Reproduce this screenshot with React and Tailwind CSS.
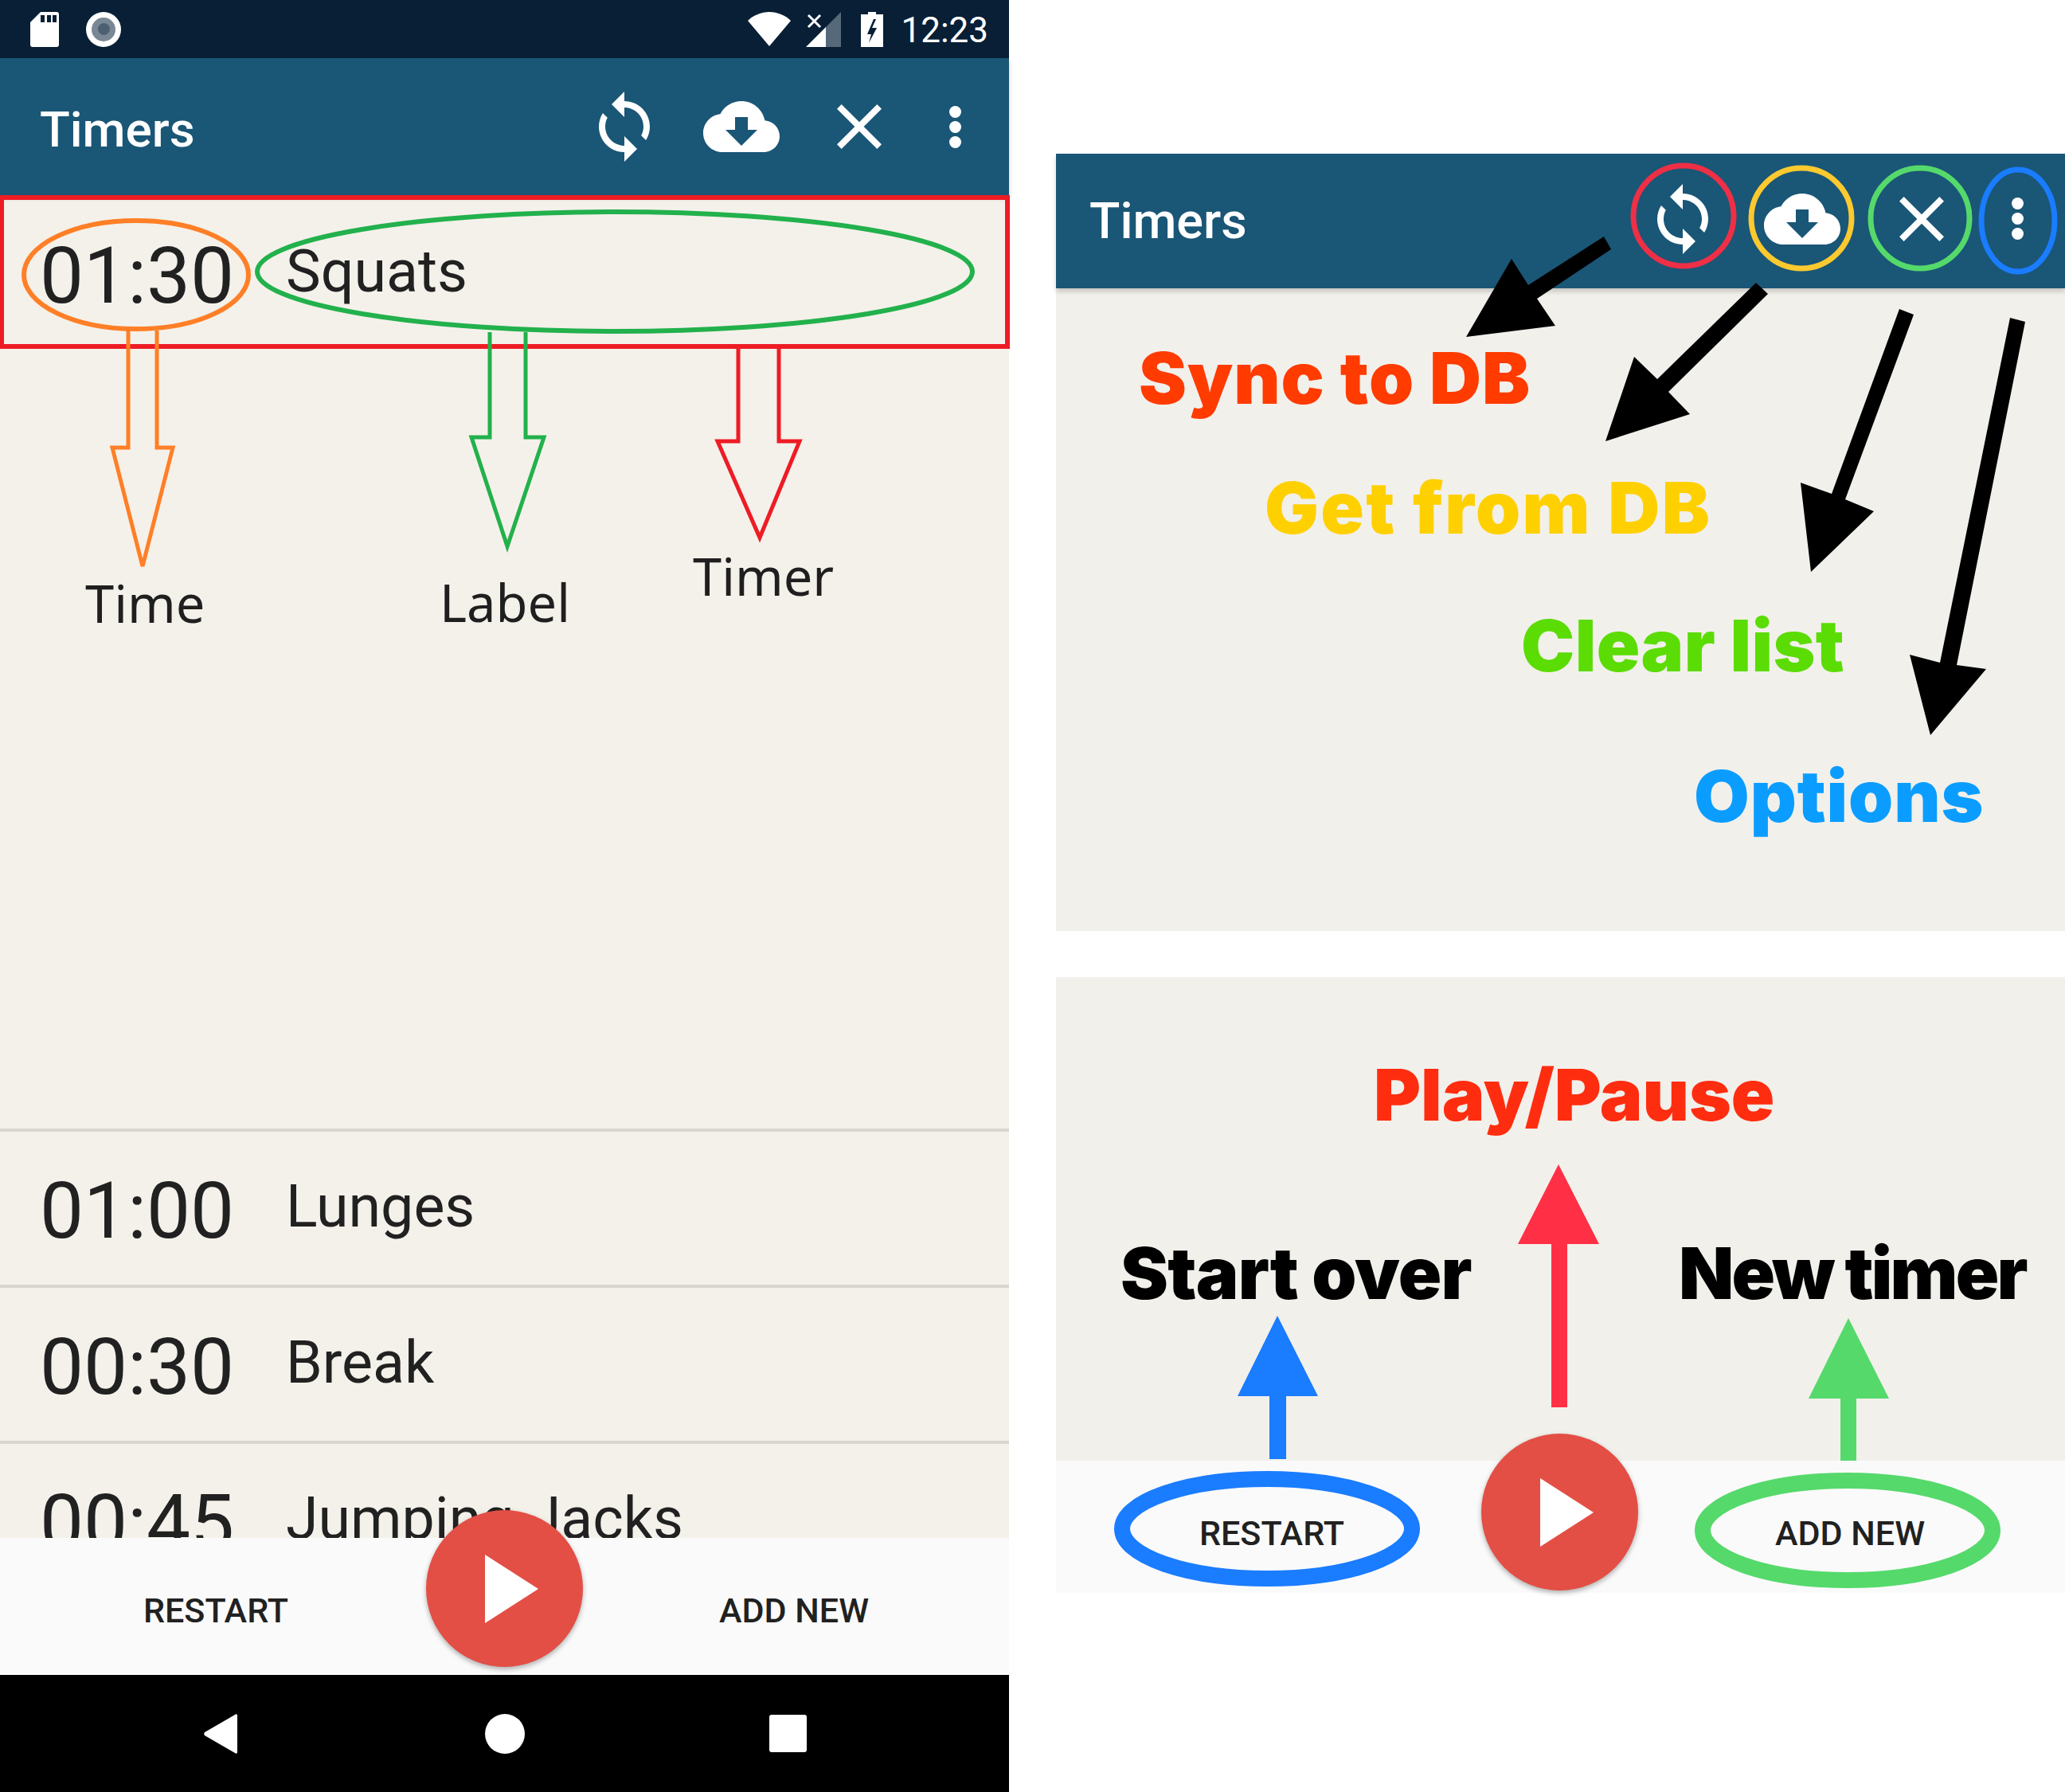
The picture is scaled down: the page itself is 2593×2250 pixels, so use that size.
const timers = [
  { time: "01:00", label: "Lunges" },
  { time: "00:30", label: "Break" },
  { time: "00:45", label: "Jumping Jacks" },
];

const MaterialIcon = ({ d, className }) => (
  <svg viewBox="0 0 24 24" className={className} fill="currentColor">
    <path d={d} />
  </svg>
);

const SYNC = "M12 4V1L8 5l4 4V6c3.31 0 6 2.69 6 6 0 1.01-.25 1.97-.7 2.8l1.46 1.46C19.54 15.03 20 13.57 20 12c0-4.42-3.58-8-8-8zm0 14c-3.31 0-6-2.69-6-6 0-1.01.25-1.97.7-2.8L5.24 7.74C4.46 8.97 4 10.43 4 12c0 4.42 3.58 8 8 8v3l4-4-4-4v3z";
const CLOUD = "M19.35 10.04C18.67 6.59 15.64 4 12 4 9.11 4 6.6 5.64 5.35 8.04 2.34 8.36 0 10.91 0 14c0 3.31 2.69 6 6 6h13c2.76 0 5-2.24 5-5 0-2.64-2.05-4.78-4.65-4.96zM17 13l-5 5-5-5h3V9h4v4h3z";
const CLOSE = "M19 6.41L17.59 5 12 10.59 6.41 5 5 6.41 10.59 12 5 17.59 6.41 19 12 13.41 17.59 19 19 17.59 13.41 12z";

const StatusBar = () => (
  <div className="h-[73px] shrink-0 bg-[#081f35] flex items-center text-white">
    <svg viewBox="0 0 36 44" className="ml-[38px] w-[36px] h-[44px]">
      <path fill="#fff" d="M13 0h20a3 3 0 0 1 3 3v38a3 3 0 0 1-3 3H3a3 3 0 0 1-3-3V13z" />
      <path fill="#081f35" d="M13 4h5v9h-5zM21 4h5v9h-5zM28 4h5v9h-5z" />
    </svg>
    <div className="ml-[34px] w-[44px] h-[44px] rounded-full bg-white flex items-center justify-center">
      <div className="w-[30px] h-[30px] rounded-full bg-[#7a8896] flex items-center justify-center">
        <div className="w-[15px] h-[15px] rounded-full bg-[#4d6072]" />
      </div>
    </div>
    <svg viewBox="0 0 54 43" className="ml-auto w-[54px] h-[43px]">
      <path fill="#fff" d="M27 43L0 11C7 4 17 0 27 0s20 4 27 11z" />
    </svg>
    <svg viewBox="0 0 44 44" className="ml-[19px] w-[44px] h-[44px]">
      <path fill="#55697a" d="M25 19L44 0v44H25z" />
      <path fill="#fff" d="M25 19v25H0z" />
      <path stroke="#fff" strokeWidth="3" d="M3 4l15 15M18 4L3 19" />
    </svg>
    <svg viewBox="0 0 28 44" className="ml-[25px] w-[28px] h-[44px]">
      <path fill="#fff" d="M9 0h10v3h9v41H0V3h9z" />
      <path fill="#081f35" d="M16 9l-8 19h5l-3 11 10-19h-6l5-11z" />
    </svg>
    <span className="ml-[22px] mr-[26px] mt-[3px] font-['Roboto',sans-serif] text-[44px] leading-none">12:23</span>
  </div>
);

const AppBar = ({ iconClasses, className, titleClass }) => (
  <div className={`bg-[#1a5676] flex items-center text-white shrink-0 relative z-10 shadow-[0_4px_6px_rgba(0,0,0,0.18)] ${className}`}>
    <span className={`font-['Roboto',sans-serif] font-medium leading-none ${titleClass}`}>Timers</span>
    <MaterialIcon d={SYNC} className={iconClasses[0]} />
    <MaterialIcon d={CLOUD} className={iconClasses[1]} />
    <MaterialIcon d={CLOSE} className={iconClasses[2]} />
    <div className={`flex flex-col gap-[4px] ${iconClasses[3]}`}>
      <div className="w-[15px] h-[15px] rounded-full bg-white" />
      <div className="w-[15px] h-[15px] rounded-full bg-white" />
      <div className="w-[15px] h-[15px] rounded-full bg-white" />
    </div>
  </div>
);

const TimerRow = ({ time, label, className = "" }) => (
  <div className={`flex items-center h-[196px] pl-[50px] pt-[8px] shrink-0 font-['Roboto',sans-serif] text-[#212121] ${className}`}>
    <span className="w-[309px] text-[98px] leading-none">{time}</span>
    <span className="text-[73.5px] leading-none -mt-[10px] whitespace-nowrap">{label}</span>
  </div>
);

const BottomBar = ({ className }) => (
  <div className={`relative z-20 shrink-0 bg-[#fafafa] font-['Roboto',sans-serif] font-medium text-[#212121] text-[43px] leading-[43px] ${className}`}>
    <div className="flex pt-[70px]">
      <span className="ml-[180px]">RESTART</span>
      <span className="ml-auto mr-[176px]">ADD NEW</span>
    </div>
  </div>
);

const Fab = ({ className }) => (
  <div className={`absolute z-30 w-[197px] h-[197px] rounded-full bg-[#e34f45] shadow-[0_3px_6px_rgba(0,0,0,0.3)] flex items-center justify-center ${className}`}>
    <svg viewBox="0 0 67 86" className="w-[67px] h-[86px] ml-[17px]">
      <path fill="#fff" d="M0 0l67 43L0 86z" />
    </svg>
  </div>
);

const Annotations = () => (
  <svg viewBox="0 0 2593 2250" className="absolute inset-0 z-40 w-[2593px] h-[2250px] pointer-events-none" fill="none">
    {/* разметка слева */}
    <rect x="2" y="248" width="1263" height="187" stroke="#ee1c25" strokeWidth="6" />
    <ellipse cx="171" cy="345" rx="141" ry="68" stroke="#ff7f27" strokeWidth="6" />
    <ellipse cx="772" cy="341" rx="449" ry="75" stroke="#22b14c" strokeWidth="6" />
    <path stroke="#ff7f27" strokeWidth="5" d="M161 415v147h-20l38 149 38-149h-20V415" />
    <path stroke="#22b14c" strokeWidth="5" d="M615 417v132h-23l45 137 46-137h-23V417" />
    <path stroke="#ee1c25" strokeWidth="5" d="M927 437v117h-26l53 121 50-121h-26V437" />

    {/* иконки справа */}
    <ellipse cx="2114" cy="271" rx="63" ry="63" stroke="#ee2f45" strokeWidth="7" />
    <ellipse cx="2262" cy="274" rx="63" ry="63" stroke="#fcc92f" strokeWidth="7" />
    <ellipse cx="2411" cy="274" rx="62" ry="63" stroke="#55d96b" strokeWidth="7" />
    <ellipse cx="2534" cy="277" rx="46" ry="64" stroke="#1a7cff" strokeWidth="7" />

    <path fill="#000" d="M2014 297l9 16-93 62 23 34-112 14 57-98 21 33z" />
    <path fill="#000" d="M2205 355l15 14-125 123 27 28-106 34 36-106 29 28z" />
    <path fill="#000" d="M2385 388l18 7-86 232 36 15-79 76-13-112 39 14z" />
    <path fill="#000" d="M2524 399l19 5-86 431 37 5-70 83-26-101 38 10z" />

    <path fill="#1a7cff" d="M1604 1652l51 101h-40v79h-21v-79h-40z" />
    <path fill="#ff3045" d="M1957 1462l51 100h-40v205h-20v-205h-42z" />
    <path fill="#55d96b" d="M2321 1655l51 101h-41v78h-20v-78h-40z" />

    <ellipse cx="1591" cy="1919.5" rx="182" ry="62.5" stroke="#1a7cff" strokeWidth="20" />
    <ellipse cx="2320" cy="1921.5" rx="182" ry="62.5" stroke="#55d96b" strokeWidth="20" />
  </svg>
);

const Caption = ({ children, className }) => (
  <span className={`absolute z-40 font-['Noto_Sans',sans-serif] text-[#1f1f1f] text-[65px] leading-none ${className}`}>{children}</span>
);

const Callout = ({ children, className }) => (
  <span className={`absolute z-40 font-['Inter',sans-serif] font-black text-[90px] leading-none whitespace-nowrap ${className}`}>{children}</span>
);

export default function App() {
  return (
    <div className="relative w-[2593px] h-[2250px] bg-white flex overflow-hidden">
      {/* Телефон */}
      <div className="w-[1267px] h-[2250px] shrink-0 flex flex-col bg-[#f4f1ea]">
        <StatusBar />
        <AppBar
          className="h-[172px] pl-[50px]"
          titleClass="text-[62px] mt-[8px]"
          iconClasses={[
            "w-[96px] h-[96px] ml-[491px]",
            "w-[96px] h-[96px] ml-[51px]",
            "w-[96px] h-[96px] ml-[52px]",
            "ml-[65px]",
          ]}
        />
        <div className="flex-1 min-h-0 overflow-hidden">
          <TimerRow time="01:30" label="Squats" />
          <div className="h-[980px] border-b-[4px] border-[#d8d6d0]" />
          {timers.map((t) => (
            <TimerRow key={t.time} time={t.time} label={t.label} className="border-b-[4px] border-[#d8d6d0]" />
          ))}
        </div>
        <BottomBar className="h-[172px]" />
        <div className="h-[147px] shrink-0 bg-black flex items-center">
          <svg viewBox="0 0 42 50" className="ml-[256px] w-[42px] h-[50px]">
            <path fill="#fff" d="M42 2v46c0 2-2 2-3 1L1 27c-1-1-1-3 0-4L39 1c1-1 3-1 3 1z" />
          </svg>
          <div className="ml-[311px] w-[50px] h-[50px] rounded-full bg-white" />
          <div className="ml-[307px] w-[47px] h-[47px] rounded-[3px] bg-white" />
        </div>
      </div>

      {/* Пояснения */}
      <div className="ml-[59px] w-[1267px] shrink-0 pt-[193px] flex flex-col">
        <div className="h-[976px] bg-[#f2f0eb] flex flex-col">
          <AppBar
            className="h-[169px] pl-[42px]"
            titleClass="text-[63px]"
            iconClasses={[
              "w-[96px] h-[96px] ml-[499px] -mt-[6px]",
              "w-[96px] h-[96px] ml-[54px] -mt-[6px]",
              "w-[96px] h-[96px] ml-[54px] -mt-[6px]",
              "ml-[65px] -mt-[6px]",
            ]}
          />
        </div>
        <div className="mt-[58px] h-[607px] bg-[#f2f0eb]" />
        <BottomBar className="h-[166px]" />
      </div>

      <Fab className="left-[535px] top-[1896px]" />
      <Fab className="left-[1860px] top-[1800px]" />

      <Annotations />

      <Caption className="left-[107px] top-[725px]">Time</Caption>
      <Caption className="left-[552px] top-[724px]">Label</Caption>
      <Caption className="left-[870px] top-[691px]">Timer</Caption>

      <Callout className="left-[1430px] top-[430px] tracking-[1px] text-[#ff3b00]">Sync to DB</Callout>
      <Callout className="left-[1588px] top-[593px] tracking-[2.4px] text-[#ffd000]">Get from DB</Callout>
      <Callout className="left-[1910px] top-[766px] tracking-[0.4px] text-[#5bdc05]">Clear list</Callout>
      <Callout className="left-[2127px] top-[955px] tracking-[0.9px] text-[#0a9dff]">Options</Callout>
      <Callout className="left-[1725px] top-[1330px] text-[#ff2d0f]">Play/Pause</Callout>
      <Callout className="left-[1407px] top-[1554px] tracking-[-0.8px] text-black">Start over</Callout>
      <Callout className="left-[2108px] top-[1554px] tracking-[-2.8px] text-black">New timer</Callout>
    </div>
  );
}
